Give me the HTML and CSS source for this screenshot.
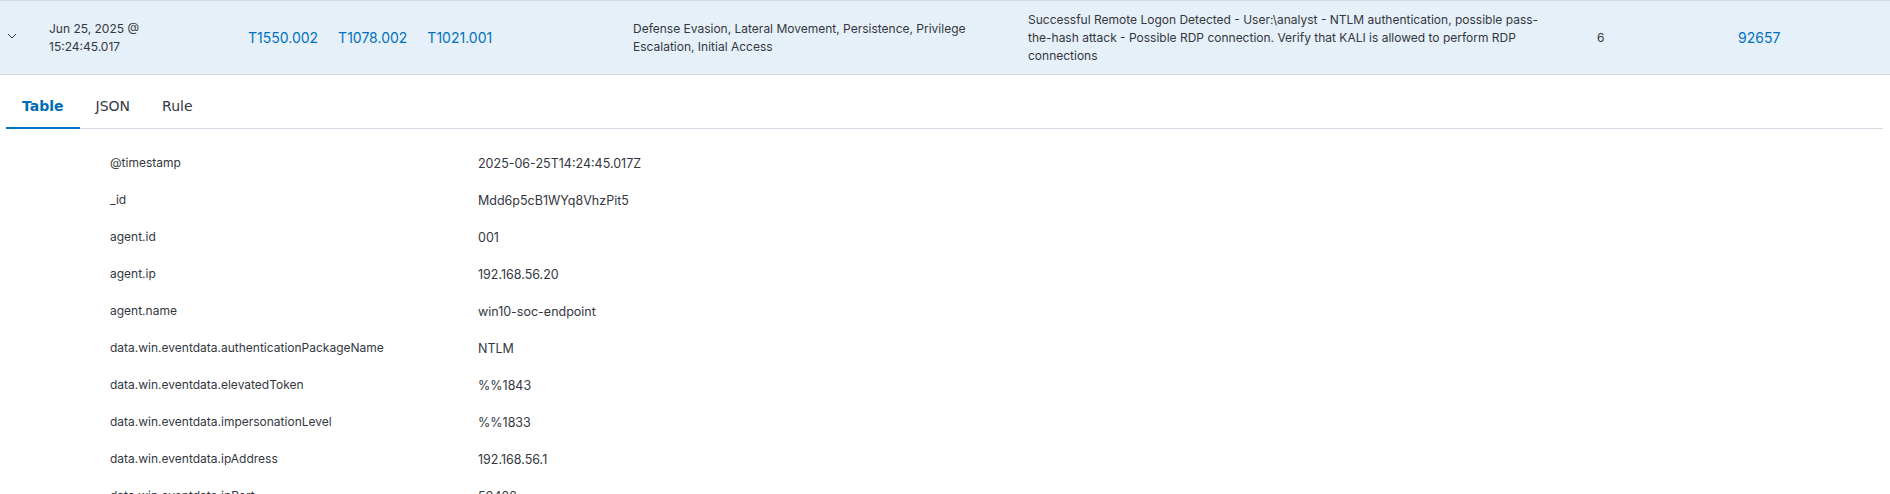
FILE: index.html
```html
<!DOCTYPE html>
<html>
<head>
<meta charset="utf-8">
<link rel="stylesheet" href="styles.css">
</head>
<body>
<div class="row">
  <div class="cell toggle">
    <svg width="10" height="6" viewBox="0 0 10 6"><path d="M1 1 L5 5 L9 1" fill="none" stroke="#343741" stroke-width="1"/></svg>
  </div>
  <div class="cell date"><span class="date-text">Jun 25, 2025 @ 15:24:45.017</span></div>
  <div class="cell techs"><a>T1550.002</a><a>T1078.002</a><a>T1021.001</a></div>
  <div class="cell tactics"><span>Defense Evasion, Lateral Movement, Persistence, Privilege Escalation, Initial Access</span></div>
  <div class="cell desc"><span>Successful Remote Logon Detected - User:\analyst - NTLM authentication, possible pass-the-hash attack - Possible RDP connection. Verify that KALI is allowed to perform RDP connections</span></div>
  <div class="cell level">6</div>
  <div class="cell ruleid"><a>92657</a></div>
</div>
<div class="details">
  <div class="tabs">
    <div class="tab active">Table</div>
    <div class="tab">JSON</div>
    <div class="tab">Rule</div>
  </div>
  <div class="fields">
    <div class="frow"><div class="fname">@timestamp</div><div class="fval">2025-06-25T14:24:45.017Z</div></div>
    <div class="frow"><div class="fname">_id</div><div class="fval">Mdd6p5cB1WYq8VhzPit5</div></div>
    <div class="frow"><div class="fname">agent.id</div><div class="fval">001</div></div>
    <div class="frow"><div class="fname">agent.ip</div><div class="fval">192.168.56.20</div></div>
    <div class="frow"><div class="fname">agent.name</div><div class="fval">win10-soc-endpoint</div></div>
    <div class="frow"><div class="fname">data.win.eventdata.authenticationPackageName</div><div class="fval">NTLM</div></div>
    <div class="frow"><div class="fname">data.win.eventdata.elevatedToken</div><div class="fval">%%1843</div></div>
    <div class="frow"><div class="fname">data.win.eventdata.impersonationLevel</div><div class="fval">%%1833</div></div>
    <div class="frow"><div class="fname">data.win.eventdata.ipAddress</div><div class="fval">192.168.56.1</div></div>
    <div class="frow"><div class="fname">data.win.eventdata.ipPort</div><div class="fval">50422</div></div>
  </div>
</div>
</body>
</html>
```
FILE: styles.css
```css
html, body {
  margin: 0;
  padding: 0;
  background: #ffffff;
  overflow: hidden;
}
body {
  font-family: Inter, "Noto Sans", sans-serif;
  color: #343741;
  font-size: 12px;
}
.row {
  display: grid;
  grid-template-columns: 49px 199px 385px 395px 569px 141px 1fr;
  background: #e6f0f8;
  border-top: 1px solid #d3dae6;
  border-bottom: 1px solid #d3dae6;
  box-sizing: border-box;
  height: 75px;
  align-items: center;
  line-height: 18px;
}
.toggle {
  display: flex;
  padding-left: 7px;
  padding-bottom: 3px;
}
.date-text { display: block; max-width: 120px; }
.techs {
  display: flex;
  gap: 20px;
  font-size: 14px;
}
a { color: #0071c2; text-decoration: none; }
.tactics span { display: block; max-width: 360px; }
.desc span { display: block; max-width: 532px; }
.ruleid { font-size: 14px; }
.details {
  padding: 0 7px 0 6px;
}
.tabs {
  display: flex;
  border-bottom: 1px solid #d3dae6;
  height: 54px;
  box-sizing: border-box;
  align-items: stretch;
}
.tab {
  font-family: "DejaVu Sans", sans-serif;
  font-size: 14px;
  padding: 10px 16px 0;
  display: flex;
  align-items: center;
  color: #343741;
  border-bottom: 2px solid transparent;
  margin-bottom: -1px;
}
.tab.active {
  color: #006bb8;
  font-weight: bold;
  border-bottom-color: #0071c2;
}
.fields {
  padding-top: 25px;
}
.frow {
  display: grid;
  grid-template-columns: 368px 1fr;
  height: 37px;
  padding-left: 104px;
  align-items: start;
}
.fname { line-height: 18px; }
.fval { line-height: 18px; font-size: 12.5px; padding-top: 1px; }
```
